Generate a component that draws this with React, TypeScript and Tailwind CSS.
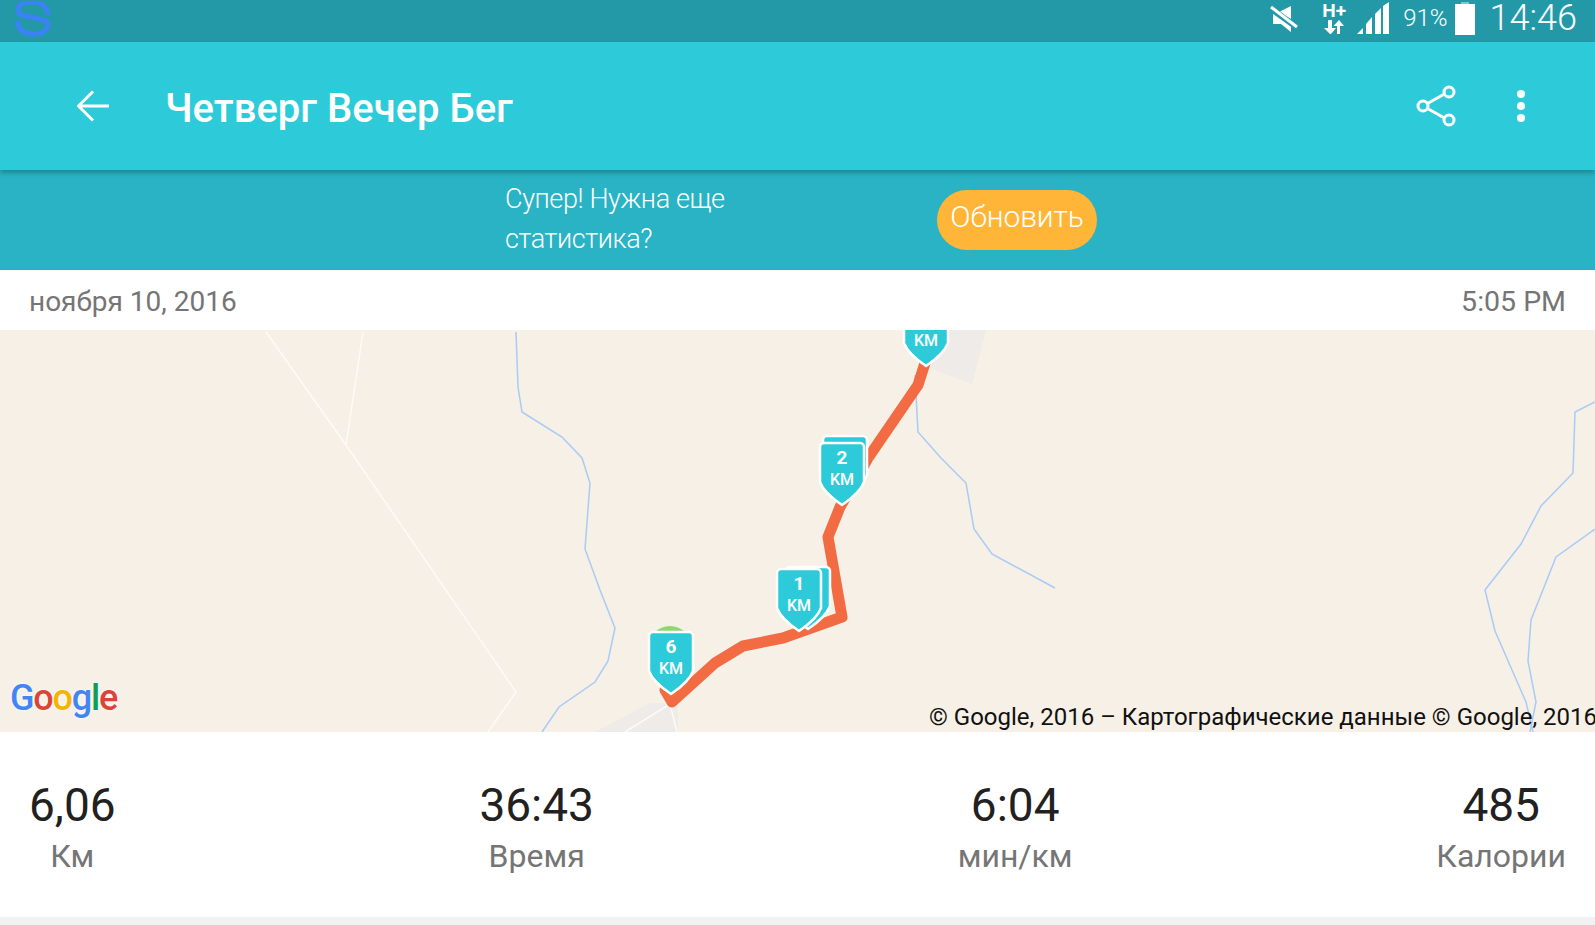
const RouteMarker = ({ x, y, label, showKm = true }: { x: number; y: number; label: string; showKm?: boolean }) => (
  <g transform={`translate(${x} ${y})`}>
    <path
      d="M4 0H40a4 4 0 0 1 4 4V39Q40 50 22 62Q4 50 0 39V4a4 4 0 0 1 4-4Z"
      fill="#2DCBD9"
      stroke="#fff"
      strokeWidth="2.5"
    />
    <text x="22" y="21" textAnchor="middle" fill="#fff" fontSize="19" fontWeight="700" fontFamily="Roboto, sans-serif">
      {label}
    </text>
    {showKm && (
      <text x="22" y="42" textAnchor="middle" fill="#fff" fontSize="16" fontWeight="500" fontFamily="Roboto, sans-serif">
        KM
      </text>
    )}
  </g>
)

const RunMap = () => (
  <svg viewBox="0 330 1595 402" className="block h-[402px] w-[1595px]">
    <rect x="0" y="330" width="1595" height="402" fill="#F6F0E7" />
    {/* built up areas */}
    <path d="M932 330H986L972 384L930 368Z" fill="#EEEBE8" />
    <path d="M595 732L650 703H678V732Z" fill="#EEEBE8" />
    {/* roads */}
    <g fill="none" stroke="#FDFBF8" strokeWidth="1.5">
      <path d="M266 332L346 445L516 692L488 732" />
      <path d="M363 332L346 445" />
      <path d="M625 732L670 704L677 732" />
    </g>
    {/* water */}
    <g fill="none" stroke="#A9CBF4" strokeWidth="1.5">
      <path d="M516 332L518 387L522 412L562 437L582 458L590 483L585 549L600 590L615 628L608 661L595 682L559 707L542 732" />
      <path d="M915 375L918 432L941 458L966 483L974 529L992 554L1055 588" />
      <path d="M1595 402L1575 412L1573 473L1541 506L1521 544L1485 590L1495 631L1526 702L1533 732" />
      <path d="M1595 529L1556 557L1531 620L1528 661L1536 702L1530 732" />
    </g>
    <circle cx="670" cy="648" r="22" fill="#8CD86E" />
    {/* route */}
    <path
      d="M925 363L918 385L868 458L840 507L828 537L842 617L783 638L743 646L715 663L672 702L665 690"
      fill="none"
      stroke="#F26B43"
      strokeWidth="11"
      strokeLinejoin="round"
      strokeLinecap="round"
    />
    <RouteMarker x={786} y={567} label="" showKm={false} />
    <RouteMarker x={777} y={569} label="1" />
    <RouteMarker x={823} y={436} label="" showKm={false} />
    <RouteMarker x={820} y={443} label="2" />
    <RouteMarker x={904} y={304} label="" />
    <RouteMarker x={649} y={632} label="6" />
  </svg>
)

const Stat = ({ value, label }: { value: string; label: string }) => (
  <div className="flex flex-col items-center">
    <span className="text-[46px] leading-[54px] text-[#212121]">{value}</span>
    <span className="text-[32px] leading-[48px] text-[#757575]">{label}</span>
  </div>
)

export default function App() {
  return (
    <div className="flex h-[925px] w-[1595px] flex-col overflow-hidden bg-white font-['Roboto',sans-serif]">
      {/* status bar */}
      <div className="flex h-[42px] shrink-0 items-center justify-between overflow-hidden bg-[#2399A8] pl-[15px] pr-[18px]">
        <svg width="36" height="36" viewBox="0 0 36 36" className="-mt-[5px]" fill="none" stroke="#3B82F6" strokeWidth="5" strokeLinecap="round">
          <path d="M33 12C30 3 24 1 18 1C9 1 2 4 3 10C4 15 12 15 20 17C28 19 33 20 33 23C33 30 26 33 18 33C10 33 4 29 2 22" />
        </svg>
        <div className="-mt-[6px] flex items-center text-white">
          <svg width="30" height="30" viewBox="0 0 30 30" fill="#fff" className="mr-[22px]">
            <path d="M8 10L22 3V16Z" />
            <path d="M4 11H8L22 21V29L12 21H4Z" />
            <path d="M1 5L29 25" stroke="#2399A8" strokeWidth="6" />
            <path d="M2 4L28 24" stroke="#fff" strokeWidth="3" />
          </svg>
          <div className="mr-[10px] flex w-[26px] flex-col items-center">
            <span className="h-[17px] text-[19px] font-bold leading-[17px]">H+</span>
            <svg width="22" height="16" viewBox="0 0 22 16" fill="#fff">
              <path d="M6 1V9H2L8 15L9 15L14 9H10V1Z" transform="translate(-1 0)" />
              <path d="M16 15V7H20L15 1L9.5 7H13V15Z" transform="translate(1 0)" />
            </svg>
          </div>
          <svg width="32" height="32" viewBox="0 0 32 32" fill="#fff" className="mr-[14px]">
            <path d="M0 32L6 26V32Z" />
            <path d="M9 32V22L15 15V32Z" />
            <path d="M18 32V12L24 6V32Z" />
            <path d="M26 32V4L32 0V32Z" />
          </svg>
          <span className="mr-[7px] text-[24px] font-light">91%</span>
          <div className="relative mr-[15px] mt-[3px] h-[31px] w-[20px] bg-white">
            <div className="absolute -top-[2px] left-[6px] h-[2px] w-[8px] bg-[#7CC4CE]" />
          </div>
          <span className="text-[36px] font-light leading-[36px]">14:46</span>
        </div>
      </div>

      {/* app bar */}
      <div className="relative z-10 flex h-[128px] shrink-0 items-center bg-[#2DCBD9] pl-[77px] pr-[70px] shadow-[0_3px_5px_rgba(0,0,0,0.25)]">
        <svg width="32" height="32" viewBox="0 0 32 32" fill="none" stroke="#fff" strokeWidth="3" className="mr-[56px]">
          <path d="M32 16H2M16 1.500L1.500 16L16 30.500" />
        </svg>
        <h1 className="flex-1 pt-[6px] text-[40px] font-medium text-white">Четверг Вечер Бег</h1>
        <svg width="42" height="42" viewBox="0 0 42 42" fill="none" stroke="#fff" strokeWidth="3" className="mr-[59px]">
          <path d="M7 21L32 7M7 21L32 35" />
          <circle cx="7" cy="21" r="5" fill="#2DCBD9" />
          <circle cx="33" cy="7" r="5" fill="#2DCBD9" />
          <circle cx="33" cy="35" r="5" fill="#2DCBD9" />
        </svg>
        <svg width="8" height="32" viewBox="0 0 8 32" fill="#fff">
          <circle cx="4" cy="4" r="4" />
          <circle cx="4" cy="16" r="4" />
          <circle cx="4" cy="28" r="4" />
        </svg>
      </div>

      {/* upgrade promo */}
      <div className="flex h-[100px] shrink-0 items-center bg-[#29B3C4] pl-[505px]">
        <p className="-mt-[2px] w-[432px] text-[27px] font-light leading-[40px] tracking-[-0.4px] text-white">
          Супер! Нужна еще
          <br />
          статистика?
        </p>
        <button className="h-[60px] w-[160px] rounded-full bg-[#FFB538] pb-[7px] text-[30px] font-light tracking-[-0.1px] text-white">
          Обновить
        </button>
      </div>

      {/* date */}
      <div className="flex h-[60px] shrink-0 items-center justify-between px-[29px] pt-[4px] text-[28px] text-[#757575]">
        <span>ноября 10, 2016</span>
        <span className="text-[28.500px]">5:05 PM</span>
      </div>

      {/* map */}
      <div className="relative h-[402px] shrink-0 overflow-hidden">
        <RunMap />
        <div className="absolute bottom-[14px] left-[10px] text-[36px] font-medium leading-[40px] tracking-[-1.2px] [text-shadow:0_0_3px_#fff]">
          <span className="text-[#4285F4]">G</span>
          <span className="text-[#DB4437]">o</span>
          <span className="text-[#F4B400]">o</span>
          <span className="text-[#4285F4]">g</span>
          <span className="text-[#0F9D58]">l</span>
          <span className="text-[#DB4437]">e</span>
        </div>
        <span className="absolute -bottom-[1px] left-[929px] whitespace-nowrap text-[24px] leading-[32px] text-[#111]">
          © Google, 2016 – Картографические данные © Google, 2016
        </span>
      </div>

      {/* stats */}
      <div className="flex h-[185px] shrink-0 items-start justify-between px-[29px] pt-[46px]">
        <Stat value="6,06" label="Км" />
        <Stat value="36:43" label="Время" />
        <Stat value="6:04" label="мин/км" />
        <Stat value="485" label="Калории" />
      </div>
      <div className="flex-1 bg-[#F2F2F2]" />
    </div>
  )
}
